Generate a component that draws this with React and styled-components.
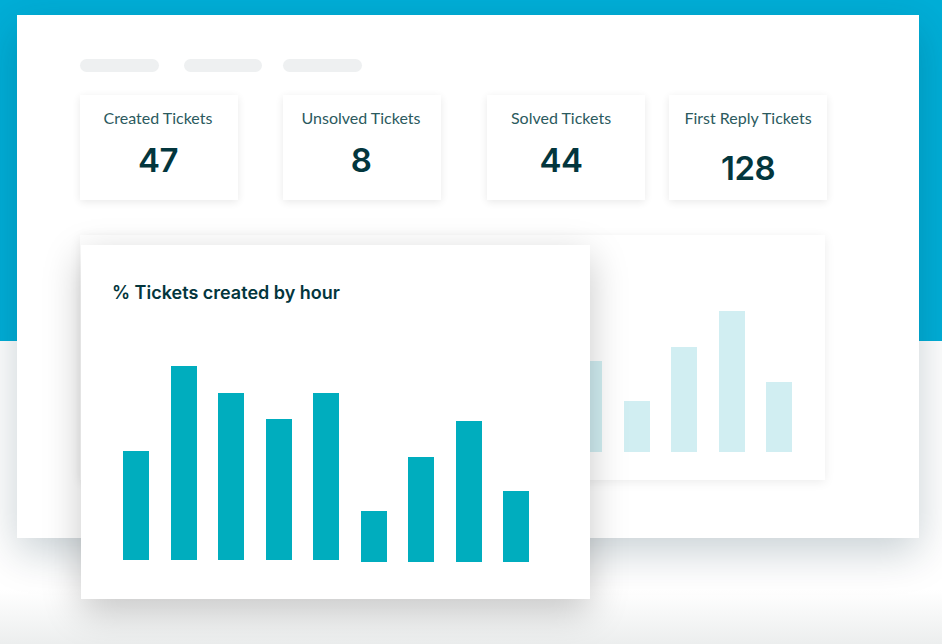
import React from "react";
import styled, { createGlobalStyle } from "styled-components";

const GlobalStyle = createGlobalStyle`
  html, body {
    margin: 0;
    padding: 0;
  }
  body {
    width: 942px;
    height: 644px;
    overflow: hidden;
    background: linear-gradient(#00aed7 0, #00aed7 341px, #ffffff 341px, #ffffff 590px, #eceeee 644px);
    font-family: "Lato", "Liberation Sans", sans-serif;
  }
`;

const Page = styled.div`
  padding: 15px 0 0 17px;
  height: 644px;
  box-sizing: border-box;
`;

// main white panel
const Panel = styled.div`
  width: 902px;
  height: 523px;
  box-sizing: border-box;
  padding: 44px 0 0 63px;
  background: #ffffff;
  box-shadow: 0 14px 40px rgba(0, 40, 60, 0.22);
  display: flex;
  flex-direction: column;
`;

const PillRow = styled.div`
  display: flex;
`;

const Pill = styled.div`
  width: ${(p) => p.$w}px;
  height: 13px;
  margin-left: ${(p) => p.$ml}px;
  border-radius: 7px;
  background: #eef0f1;
`;

const StatRow = styled.div`
  display: flex;
  margin-top: 23px;
`;

const StatCard = styled.div`
  width: 158px;
  height: 105px;
  margin-left: ${(p) => p.$ml}px;
  box-sizing: border-box;
  padding: 13px ${(p) => p.$pr}px 0 0;
  background: #ffffff;
  box-shadow: 0 2px 8px rgba(0, 0, 0, 0.09);
  display: flex;
  flex-direction: column;
  align-items: center;
`;

const StatLabel = styled.div`
  font-size: 16px;
  line-height: 20px;
  color: #2b5a5e;
  white-space: nowrap;
`;

const StatValue = styled.div`
  margin-top: ${(p) => p.$mt}px;
  font-family: "Inter", "Liberation Sans", sans-serif;
  font-size: 33px;
  line-height: 40px;
  font-weight: 600;
  letter-spacing: -0.5px;
  color: #03363d;
`;

const ChartArea = styled.div`
  position: relative;
  margin-top: 35px;
  width: 745px;
  height: 245px;
`;

const BackCard = styled.div`
  width: 100%;
  height: 100%;
  box-sizing: border-box;
  padding: 0 33px 28px 0;
  background: #ffffff;
  box-shadow: 0 2px 10px rgba(0, 0, 0, 0.08);
  display: flex;
  justify-content: flex-end;
  align-items: flex-end;
`;

const FrontCard = styled.div`
  position: absolute;
  left: 1px;
  top: 10px;
  width: 509px;
  height: 354px;
  box-sizing: border-box;
  padding: 37px 0 0 31px;
  background: #ffffff;
  box-shadow: 0 12px 36px rgba(0, 0, 0, 0.22);
  display: flex;
  flex-direction: column;
`;

const ChartTitle = styled.div`
  font-family: "Inter", "Liberation Sans", sans-serif;
  font-size: 18px;
  line-height: 22px;
  font-weight: 600;
  color: #03363d;
`;

const Bars = styled.div`
  display: flex;
  align-items: flex-end;
  gap: 21.5px;
  height: ${(p) => p.$h}px;
  margin: ${(p) => p.$m};
`;

const Bar = styled.div`
  width: 26px;
  height: ${(p) => p.$h}px;
  margin-bottom: ${(p) => (p.$low ? -2 : 0)}px;
  background: ${(p) => (p.$light ? "#d1eef2" : "#00adbe")};
`;

const stats = [
  { label: "Created Tickets", value: "47", ml: 0, mt: 12, pr: 2 },
  { label: "Unsolved Tickets", value: "8", ml: 45, mt: 12, pr: 2 },
  { label: "Solved Tickets", value: "44", ml: 46, mt: 12, pr: 10 },
  { label: "First Reply Tickets", value: "128", ml: 24, mt: 20, pr: 0 },
];

const frontBars = [
  { h: 109 }, { h: 194 }, { h: 167 }, { h: 141 }, { h: 167 },
  { h: 51, low: true }, { h: 105, low: true }, { h: 141, low: true }, { h: 71, low: true },
];

const backBars = [80, 120, 100, 70, 91, 51, 105, 141, 70];

export default function App() {
  return (
    <Page>
      <GlobalStyle />
      <Panel>
        <PillRow>
          <Pill $w={79} $ml={0} />
          <Pill $w={78} $ml={25} />
          <Pill $w={79} $ml={21} />
        </PillRow>
        <StatRow>
          {stats.map((s) => (
            <StatCard key={s.label} $ml={s.ml} $pr={s.pr}>
              <StatLabel>{s.label}</StatLabel>
              <StatValue $mt={s.mt}>{s.value}</StatValue>
            </StatCard>
          ))}
        </StatRow>
        <ChartArea>
          <BackCard>
            <Bars $h={141} $m="0">
              {backBars.map((h, i) => (
                <Bar key={i} $h={h} $light />
              ))}
            </Bars>
          </BackCard>
          <FrontCard>
            <ChartTitle>% Tickets created by hour</ChartTitle>
            <Bars $h={194} $m="62px 0 0 11px">
              {frontBars.map((b, i) => (
                <Bar key={i} $h={b.h} $low={b.low} />
              ))}
            </Bars>
          </FrontCard>
        </ChartArea>
      </Panel>
    </Page>
  );
}
